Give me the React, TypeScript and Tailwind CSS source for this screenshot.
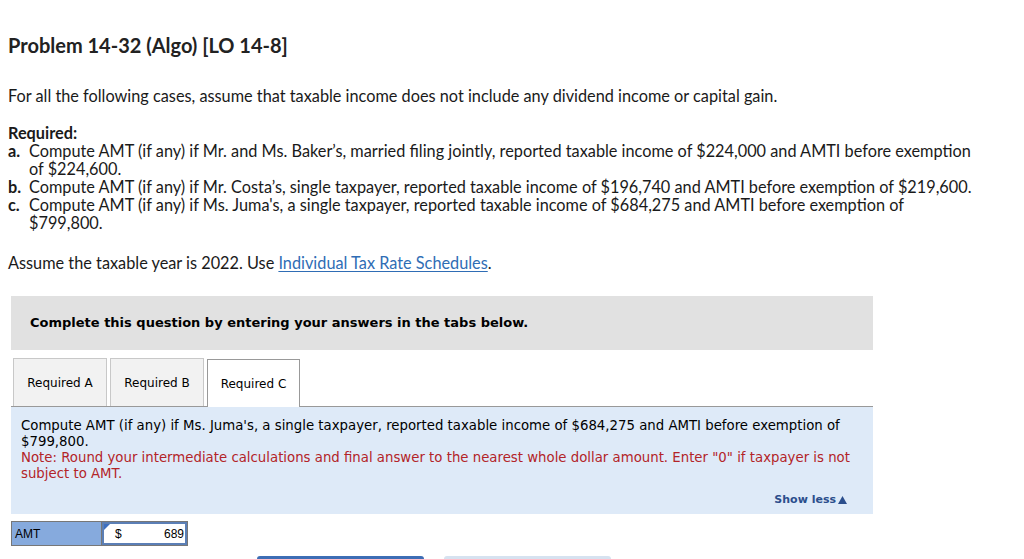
import { useState } from 'react';

const tabs = ['Required A', 'Required B', 'Required C'];

export default function App() {
  const [active, setActive] = useState(2);

  return (
    <div className="min-h-screen bg-white text-[#1a1a1a] font-['Lato',sans-serif] overflow-hidden h-[559px]">
      <div className="pl-2 pr-4 pt-[33px]">
        {/* Title */}
        <h1 className="text-[20px] font-bold leading-6 text-[#222]">Problem 14-32 (Algo) [LO 14-8]</h1>

        <p className="mt-[30px] text-[16.3px] leading-[18px]">
          For all the following cases, assume that taxable income does not include any dividend income or capital gain.
        </p>

        <p className="mt-[19px] text-[16.3px] leading-[18px] font-bold">Required:</p>
        <ol className="text-[16.3px] leading-[18px]">
          <li className="flex">
            <span className="w-[21px] shrink-0 font-bold">a.</span>
            <span className="max-w-[950px]">
              Compute AMT (if any) if Mr. and Ms. Baker’s, married filing jointly, reported taxable income of $224,000 and AMTI before exemption of $224,600.
            </span>
          </li>
          <li className="flex">
            <span className="w-[21px] shrink-0 font-bold">b.</span>
            <span>Compute AMT (if any) if Mr. Costa’s, single taxpayer, reported taxable income of $196,740 and AMTI before exemption of $219,600.</span>
          </li>
          <li className="flex">
            <span className="w-[21px] shrink-0 font-bold">c.</span>
            <span className="max-w-[880px]">
              Compute AMT (if any) if Ms. Juma's, a single taxpayer, reported taxable income of $684,275 and AMTI before exemption of $799,800.
            </span>
          </li>
        </ol>

        <p className="mt-[22px] text-[16.3px] leading-[18px]">
          Assume the taxable year is 2022. Use{' '}
          <a href="#" className="text-[#2f6db5] underline underline-offset-2">Individual Tax Rate Schedules</a>.
        </p>
      </div>

      {/* Question block */}
      <div className="ml-[11px] mt-[24px] w-[862px] font-['DejaVu_Sans','Verdana',sans-serif]">
        <div className="h-[54px] bg-[#e1e1e1] flex items-center pl-[19px]">
          <span className="text-[13px] font-bold text-black">Complete this question by entering your answers in the tabs below.</span>
        </div>

        <div className="mt-2 flex items-end pl-[2px] gap-[3px]">
          {tabs.map((t, i) => (
            <button
              key={t}
              onClick={() => setActive(i)}
              className={
                i === active
                  ? 'h-[48px] w-[93px] bg-white border border-[#999] border-b-0 text-[12px] text-black relative -mb-px z-10'
                  : 'h-[48px] w-[94px] bg-[#f2f2f2] border border-[#c8c8c8] border-b-0 text-[12px] text-black'
              }
            >
              {t}
            </button>
          ))}
        </div>

        <div className="border-t border-[#999] bg-[#deeaf8] h-[108px] px-[10px] pt-[11px] relative">
          <p className="text-[13.3px] leading-4 text-black max-w-[845px]">
            Compute AMT (if any) if Ms. Juma's, a single taxpayer, reported taxable income of $684,275 and AMTI before exemption of $799,800.
          </p>
          <p className="text-[13.3px] leading-4 text-[#b32428] max-w-[845px]">
            Note: Round your intermediate calculations and final answer to the nearest whole dollar amount. Enter "0" if taxpayer is not subject to AMT.
          </p>
          <button className="absolute right-[26px] bottom-[6px] text-[11px] font-bold text-[#2b4e8c] flex items-center gap-[2px]">
            Show less
            <svg width="9" height="8" viewBox="0 0 9 8"><path d="M4.5 0 L9 8 L0 8 Z" fill="#2b4e8c" /></svg>
          </button>
        </div>

        {/* Answer table */}
        <div className="mt-[7px] flex h-[25px] w-[177px] border border-[#777] font-['Liberation_Sans',Arial,sans-serif] text-[12px]">
          <div className="w-[90px] bg-[#86aadd] border-r border-[#777] pl-[3px] flex items-center text-black">AMT</div>
          <div className="flex-1 relative bg-white border-2 border-[#5b7fb6] flex items-center pl-[11px] pr-[1px] text-black">
            <span className="absolute left-0 top-0 w-0 h-0 border-t-[6px] border-t-[#3d6fc0] border-r-[6px] border-r-transparent" />
            <span>$</span>
            <span className="ml-auto">689</span>
          </div>
        </div>

        {/* Bottom buttons (cut off) */}
        <div className="mt-[10px] flex gap-[20px] pl-[246px]">
          <div className="h-[10px] w-[167px] rounded-t-[3px] bg-[#3d6db5]" />
          <div className="h-[10px] w-[167px] rounded-t-[3px] bg-[#d6e2f0]" />
        </div>
      </div>
    </div>
  );
}
